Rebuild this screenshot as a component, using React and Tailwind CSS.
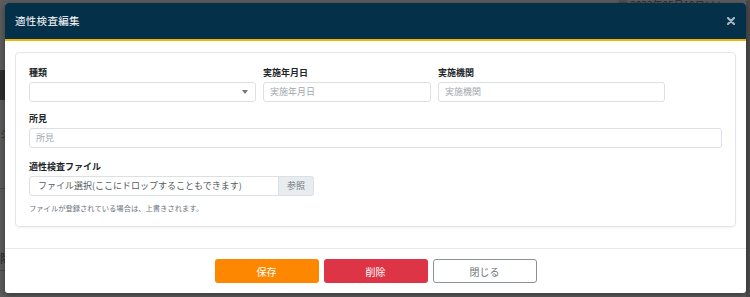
import React from "react";

const font = { fontFamily: '"Noto Sans CJK JP", "Noto Sans", sans-serif' };

function Label({ children }) {
  return (
    <div className="text-[9px] leading-[13px] font-bold text-[#212529] mb-[3px]">
      {children}
    </div>
  );
}

function TextInput({ placeholder, className = "" }) {
  return (
    <div
      className={
        "h-[20px] border border-[#dcdfe3] rounded-[3px] bg-white flex items-center px-[6px] text-[9px] text-[#a3a8ad] " +
        className
      }
    >
      {placeholder}
    </div>
  );
}

export default function App() {
  return (
    <div
      className="relative w-[750px] h-[297px] overflow-hidden bg-[#5c5c5c]"
      style={font}
    >
      {/* dimmed background page hints */}
      <div className="absolute left-0 top-[70px] w-[6px] h-[30px] bg-[#2f2f2f]" />
      <div className="absolute left-0 top-[188px] w-[6px] h-px bg-[#4a4a4a]" />
      <div className="absolute left-0 top-[270px] w-[6px] h-px bg-[#4a4a4a]" />
      <div className="absolute left-0 top-[250px] text-[11px] text-[#222]">除</div>
      <div className="absolute left-0 top-[128px] text-[10px] leading-[12px] text-[#333]">
        ジ
      </div>
      <div className="absolute right-0 top-0 w-[4px] h-[297px] bg-[#4b4b4b]" />
      <div className="absolute left-[618px] top-0 text-[10px] leading-[10px] text-[#2a2a2a]">
        ▦ 2022年05月10日(火)
      </div>

      {/* modal */}
      <div className="absolute left-[5px] top-[3px] w-[741px] h-[290px] bg-white rounded-[3px] overflow-hidden flex flex-col shadow-[0_2px_6px_rgba(0,0,0,0.4)]">
        <div className="h-[38px] shrink-0 bg-[#05304a] border-b-2 border-[#f2b400] flex items-center justify-between pl-[10px] pr-[11px]">
          <div className="text-[10.5px] text-white tracking-[0.3px]">適性検査編集</div>
          <svg width="8" height="8" viewBox="0 0 8 8">
            <path d="M1 1 L7 7 M7 1 L1 7" stroke="#aab6c1" strokeWidth="2.2" strokeLinecap="round" />
          </svg>
        </div>

        <div className="px-[10px] pt-[11px] pb-[21px]">
          <div className="h-[175px] border border-[#e3e6ea] rounded-[4px] shadow-[0_1px_2px_rgba(0,0,0,0.06)] pl-[13px] pr-[13px] pt-[13px]">
            <div className="flex gap-[7px]">
              <div className="w-[227px]">
                <Label>種類</Label>
                <div className="h-[20px] border border-[#dcdfe3] rounded-[3px] bg-white flex items-center justify-end pr-[7px]">
                  <svg width="6" height="4" viewBox="0 0 6 4">
                    <path d="M0 0 L6 0 L3 4 Z" fill="#777" />
                  </svg>
                </div>
              </div>
              <div className="w-[168px]">
                <Label>実施年月日</Label>
                <TextInput placeholder="実施年月日" />
              </div>
              <div className="w-[227px]">
                <Label>実施機関</Label>
                <TextInput placeholder="実施機関" />
              </div>
            </div>

            <div className="mt-[10px]">
              <Label>所見</Label>
              <TextInput placeholder="所見" />
            </div>

            <div className="mt-[12px]">
              <Label>適性検査ファイル</Label>
              <div className="flex w-[285px] h-[20px]">
                <div className="w-[250px] border border-[#dcdfe3] rounded-l-[3px] flex items-center pl-[8px] text-[9px] text-[#555b61]">
                  ファイル選択(ここにドロップすることもできます)
                </div>
                <div className="w-[35px] border border-l-0 border-[#dcdfe3] rounded-r-[3px] bg-[#e9ecef] flex items-center justify-center text-[9px] text-[#6c757d]">
                  参照
                </div>
              </div>
              <div className="mt-[7px] text-[7.3px] leading-[11px] text-[#6c757d]">
                ファイルが登録されている場合は、上書きされます。
              </div>
            </div>
          </div>
        </div>

        <div className="border-t border-[#e7e9ec] pt-[10px] pb-[10px] flex justify-center gap-[5px]">
          <div className="w-[104px] h-[24px] rounded-[3px] bg-[#fd8700] text-white text-[10px] flex items-center justify-center">
            保存
          </div>
          <div className="w-[104px] h-[24px] rounded-[3px] bg-[#dd3446] text-white text-[10px] flex items-center justify-center">
            削除
          </div>
          <div className="w-[104px] h-[24px] rounded-[3px] border border-[#8c9298] text-[#6c757d] text-[10px] flex items-center justify-center">
            閉じる
          </div>
        </div>
      </div>
    </div>
  );
}
